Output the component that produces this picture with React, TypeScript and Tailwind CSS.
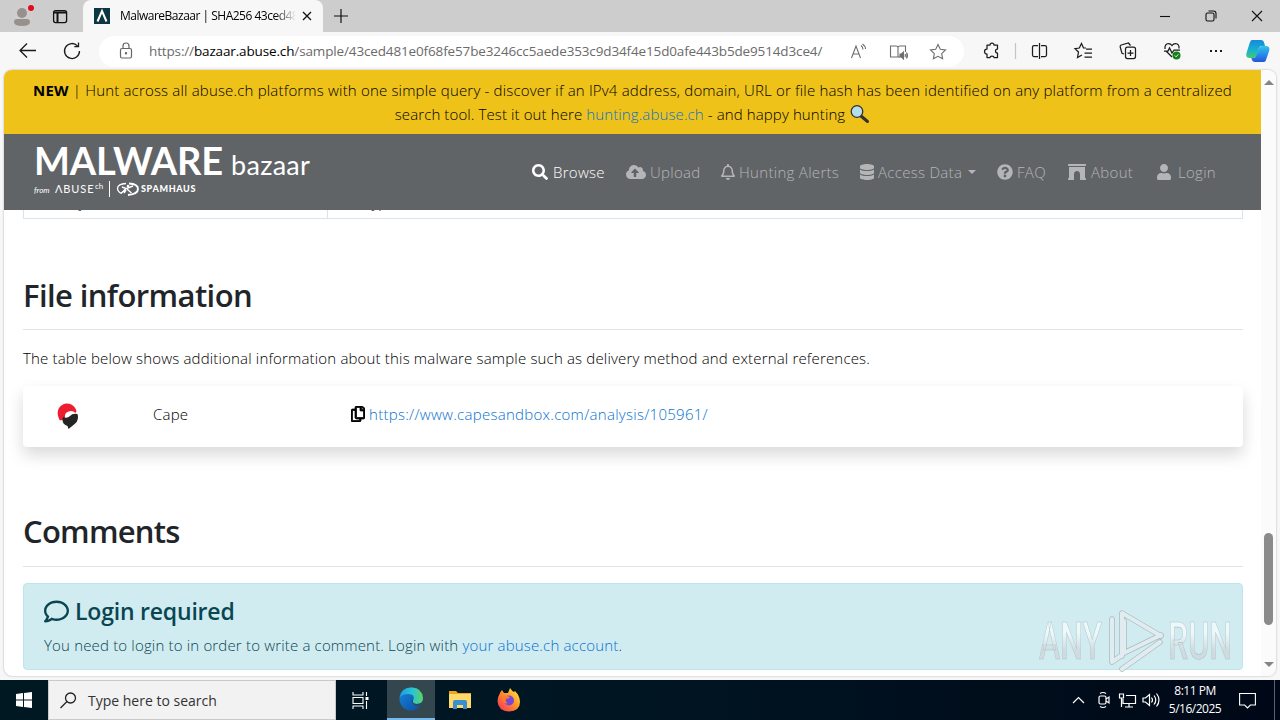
import type { ReactNode } from 'react';
import { FaArchway, FaCloudUploadAlt, FaDatabase, FaQuestionCircle, FaRegBell, FaRegComment, FaRegCopy, FaSearch, FaUser } from 'react-icons/fa';

function TitleBar() {
  return (
    <div className="flex h-8 bg-[#cdcdcd] text-black">
      <div className="flex w-[83px] items-center rounded-br-md">
        <svg width="83" height="32" viewBox="0 0 83 32" fill="none">
          <circle cx="22" cy="16" r="11" fill="#d0cecc" />
          <circle cx="22" cy="13" r="5" fill="#96918d" />
          <path d="M14 22q0-3 3-3h10q3 0 3 3 0 4-8 4t-8-4z" fill="#96918d" />
          <circle cx="31" cy="8" r="3" fill="#e00b1c" />
          <rect x="53.6" y="10.6" width="13" height="12" rx="2" stroke="#111" strokeWidth="1.3" />
          <path d="M54 12.5h12.5M57.5 13v9.5" stroke="#111" strokeWidth="2" />
        </svg>
      </div>
      <div className="flex h-8 w-[240px] items-center rounded-t-lg bg-[#f7f7f7] pl-[11px]">
        <svg width="16" height="16" viewBox="0 0 16 16">
          <rect width="16" height="16" fill="#0c3642" />
          <path d="M3.5 13.5 8 3l4.500 10.500" fill="none" stroke="#fff" strokeWidth="2" />
        </svg>
        <span className="ml-[10px] w-[176px] overflow-hidden bg-linear-to-r from-black from-88% to-transparent bg-clip-text text-[12px] tracking-[-0.5px] whitespace-nowrap text-transparent">
          MalwareBazaar | SHA256 43ced48
        </span>
        <svg className="ml-[6px]" width="10" height="10" viewBox="0 0 10 10" stroke="#111" strokeWidth="1.3">
          <path d="m1 1 8 8M9 1 1 9" />
        </svg>
      </div>
      <div className="flex flex-1 items-center justify-between pr-[17px] pl-[11px]">
        <svg width="14" height="14" viewBox="0 0 14 14" stroke="#111" strokeWidth="1.2">
          <path d="M7 0v14M0 7h14" />
        </svg>
        <svg width="104" height="12" viewBox="0 0 104 12" fill="none" stroke="#111" strokeWidth="1.1">
          <path d="M1 6.500h10" />
          <rect x="47" y="3" width="8" height="8" rx="1.500" />
          <path d="M49.500 1h5q2.500 0 2.500 2.500v5" />
          <path d="m93 1 10 10M103 1 93 11" />
        </svg>
      </div>
    </div>
  );
}

function ToolBar() {
  return (
    <div className="flex h-[38px] items-center bg-[#f7f7f7]">
      <svg width="99" height="38" viewBox="0 0 99 38" fill="none" stroke="#1b1b1b" strokeWidth="1.3">
        <path d="M36 18.500H20.500M27 11.500l-7 7 7 7" />
        <path d="M79.500 19a7.500 7.500 0 1 1-2-5.100M78.500 10.500v4.200h-4.200" />
      </svg>
      <div className="flex h-[31px] w-[865px] items-center rounded-full bg-white">
        <svg width="50" height="31" viewBox="0 0 50 31" fill="none" stroke="#666" strokeWidth="1.2">
          <rect x="21.500" y="12.500" width="11" height="9.500" rx="1.500" />
          <path d="M24 12.500V10q0-3 3-3t3 3v2.500" />
          <circle cx="27" cy="17.200" r=".6" fill="#666" />
        </svg>
        <span className="w-[700px] text-[13.5px] tracking-[-0.14px] whitespace-nowrap text-[#6b6b6b]">
          https://<span className="text-black">bazaar.abuse.ch</span>/sample/43ced481e0f68fe57be3246cc5aede353c9d34f4e15d0afe443b5de9514d3ce4/
        </span>
        <svg width="110" height="31" viewBox="849 35 110 31" fill="none" stroke="#6d6d6d" strokeWidth="1.1">
          <path d="m851.500 57 4.500-12 4.500 12M853 53h6M861 44.500q2 1.500 2 4M862.500 43q3 2 3 5" />
          <path d="M898 46v10h-7.500V45h5.500q2 0 2 1.500 0-1.500 2-1.500h5.500v6M898 56h2" />
          <path d="M900 53h1.500l2-2v7l-2-2H900zM905 53q1 1.500 0 3M906.500 51.500q2 3 0 6" fill="#6d6d6d" />
          <path d="m938 43.500 2.300 4.800 5.200.7-3.800 3.600.9 5.200-4.600-2.500-4.600 2.500.9-5.200-3.800-3.600 5.200-.7z" />
        </svg>
      </div>
      <svg width="316" height="38" viewBox="964 32 316 38" fill="none" stroke="#1c1c1c" strokeWidth="1.25">
        <path d="M987 45h3q0-2 2-2t2 2h3.500v4q-2 0-2 2t2 2v4.500H994q0-1.500-2-1.500t-2 1.500h-3V54q-2.500 0-2.500-2.500T987 49z" strokeLinejoin="round" />
        <path d="M1015.500 43v16" stroke="#c4c4c4" />
        <path d="M1038 45.500h-4q-1.500 0-1.500 1.500v8q0 1.500 1.500 1.500h4M1041 45.500h4q1.500 0 1.500 1.500v8q0 1.500-1.500 1.500h-4M1039.500 43v16" />
        <path d="m1086 48-2.500-.1-2-4.400-2.200 4.500-4.300.6 3.500 3.400-1 5.500 4.500-2.500M1086 49h6M1084.500 53h7.500M1084.500 57h7.500" />
        <path d="m1124 54-2-.7-1.800-6.300q-.3-1.500 1-2l7.300-2 2 2.500" />
        <rect x="1125.500" y="47" width="10" height="11.500" rx="2" />
        <path d="M1130.500 50v6M1127.500 53h6" />
        <path d="m1172 57-5.500-5.500M1165 49q-.5-5 3.500-5.500 2.200 0 3.500 2 1.300-2 3.500-2 4 .5 3.500 5M1164 51h4l1.500-3 2.500 5 2-3h6" />
        <circle cx="1176.500" cy="55.500" r="4" fill="#16801f" stroke="none" />
        <path d="m1174.800 55.500 1.300 1.300 2.200-2.400" stroke="#fff" strokeWidth=".9" />
        <path d="M1210 51h2M1215 51h2M1220 51h2" strokeWidth="2" />
        <defs>
          <linearGradient id="pilotLeft" x1="0" y1="0" x2="0" y2="1">
            <stop stopColor="#1689dc" />
            <stop offset=".6" stopColor="#19b4cb" />
            <stop offset="1" stopColor="#48c96c" />
          </linearGradient>
          <linearGradient id="pilotRight" x1="0" y1="0" x2="0" y2="1">
            <stop stopColor="#30c5e4" />
            <stop offset=".5" stopColor="#2a8eed" />
            <stop offset="1" stopColor="#2357dc" />
          </linearGradient>
        </defs>
        <path d="M1252 40h9q2.500 0 3.200 3l.8 3h-3q-2.500 0-3.300 3l-1.700 6q-1 3-4 3h-3q-5 0-3.500-5l3-9.500q1-3.500 2.500-3.500z" fill="url(#pilotLeft)" stroke="none" />
        <path d="M1264 62h-9q-2.500 0-3.200-2.500l-.5-1.500h2q2.500 0 3.300-3l2-6q1-3 4-3h3q5 0 3.500 5l-2.600 7.500q-1 3.500-2.500 3.500z" fill="url(#pilotRight)" stroke="none" />
      </svg>
    </div>
  );
}

function NavItem({ icon, label, className }: { icon: ReactNode; label: string; className: string }) {
  return (
    <a className={`flex shrink-0 items-center text-[15px] tracking-[0.3px] whitespace-nowrap ${className}`}>
      {icon}
      <span>{label}</span>
    </a>
  );
}

function SiteHeader() {
  return (
    <header className="z-10 w-[1257px] shrink-0">
      <div className="h-16 bg-[#efc219] pt-2 text-center text-[15px] leading-6 font-light text-black">
        <p className="tracking-[0.18px] whitespace-nowrap">
          <b className="font-bold">NEW</b> | Hunt across all abuse.ch platforms with one simple query - discover if an IPv4 address, domain, URL or file hash has been identified on any platform from a centralized
        </p>
        <p className="flex items-center justify-center tracking-[0.11px] whitespace-pre">
          search tool. Test it out here <a className="text-[#0b74cb]">hunting.abuse.ch</a> - and happy hunting{' '}
          <svg width="21" height="20" viewBox="0 0 21 20">
            <path d="m12 12 6.500 5.500" stroke="#333" strokeWidth="3" strokeLinecap="round" />
            <circle cx="8" cy="7.500" r="5.800" fill="#b5deec" stroke="#333" strokeWidth="1.300" />
          </svg>
        </p>
      </div>
      <div className="flex h-[76px] justify-between bg-[#616467] pr-[44px] pl-[30px]">
        <div className="flex flex-col text-white">
          <div className="mt-[6px] flex h-[40px] items-baseline font-[Lato,sans-serif]">
            <span className="w-[197px] text-[38px] leading-[40px] font-bold tracking-[-0.2px]">MALWARE</span>
            <span className="text-[27px] leading-[40px] tracking-[0.3px]">bazaar</span>
          </div>
          <div className="flex h-[18px] items-center font-[Lato,sans-serif]">
            <i className="w-[21px] pt-0.5 text-[8px]">from</i>
            <span className="w-[40px] text-[11px] tracking-[0.9px]">ΛBUSE</span>
            <span className="mb-[6px] w-[9px] text-[8px]">ch</span>
            <span className="mr-[6px] ml-[5px] h-[16px] w-px bg-white" />
            <svg width="23" height="14" viewBox="0 0 23 14" fill="none" stroke="#fff">
              <path d="M10 1.500Q1.500 2 1.500 6.500q0 3 4 5" strokeWidth="1.300" />
              <path d="M12 13q10-1 10-6 0-5-9-5.500" strokeWidth="1.900" />
              <path d="m5 11.500 5-5L6 5M10.500 6.500 17 4M11 7l4.500 4M10 8l-2 3" strokeWidth="1.400" />
              <circle cx="12" cy="4" r="1.300" fill="#fff" stroke="none" />
            </svg>
            <span className="ml-[2px] text-[9px] font-black tracking-[0.65px]">SPAMHAUS</span>
          </div>
        </div>
        <nav className="flex items-center font-light text-[#b3b5b7]">
          <NavItem className="w-[94px] gap-[5px] text-white" icon={<FaSearch className="h-4 w-4" />} label="Browse" />
          <NavItem className="w-[95px] gap-1" icon={<FaCloudUploadAlt className="h-4 w-5" />} label="Upload" />
          <NavItem className="w-[139px] gap-1" icon={<FaRegBell className="h-4 w-3.5" />} label="Hunting Alerts" />
          <NavItem className="w-[108px] gap-1" icon={<FaDatabase className="h-4 w-3.5" />} label="Access Data" />
          <span className="mr-[21px] h-0 w-0 border-x-4 border-t-4 border-x-transparent border-t-[#b3b5b7]" />
          <NavItem className="w-[71px] gap-1" icon={<FaQuestionCircle className="h-4 w-4" />} label="FAQ" />
          <NavItem className="w-[89px] gap-[5px]" icon={<FaArchway className="h-4 w-[18px]" />} label="About" />
          <NavItem className="w-[60px] gap-[7px]" icon={<FaUser className="h-4 w-3.5" />} label="Login" />
        </nav>
      </div>
    </header>
  );
}

function PageContent() {
  return (
    <main className="w-[1257px] pr-[18px] pl-[19px] text-[15px] leading-6 font-light text-black">
      <div className="flex h-[9px] items-end overflow-hidden border-x border-b border-[#dee2e6]">
        <div className="h-7 w-[304px] border-r border-[#dee2e6] pl-2">Delivery</div>
        <div className="h-7 pl-[12px]">File type</div>
      </div>
      <h2 className="mt-[57px] text-[31px] leading-[38px] font-semibold tracking-[-0.6px] text-[#212529]">File information</h2>
      <hr className="mt-[15px] border-[#e2e3e4]" />
      <p className="mt-[16px] tracking-[0.17px]">The table below shows additional information about this malware sample such as delivery method and external references.</p>
      <div className="mt-[16px] flex h-[61px] items-center rounded bg-white pb-[5px] shadow-[0_8px_16px_rgba(0,0,0,0.15)]">
        <svg className="mt-1 ml-[34px]" width="22" height="26" viewBox="0 0 22 26">
          <path d="M2.500 17Q-1 10 2 5q3-4.500 8-4.500 7 0 9.500 7.500l-1 2q-3-3-7-1.500-4 1.500-3.500 5.500-1 4-5.500 3z" fill="#ed1c2e" />
          <path d="M6 14q4 2 7-1 2.500-3 7.500-2 2 7-4 11l-5 4-1-3Q4 21 6 14z" fill="#242424" />
        </svg>
        <span className="ml-[74px] w-[198px] tracking-[0.2px]">Cape</span>
        <FaRegCopy className="h-4 w-3.5" strokeWidth={24} />
        <a className="ml-[4px] tracking-[0.28px] text-[#0872d0]">https://www.capesandbox.com/analysis/105961/</a>
      </div>
      <h2 className="mt-[65px] text-[31px] leading-[38px] font-semibold tracking-[-0.75px] text-[#212529]">Comments</h2>
      <hr className="mt-[16px] border-[#e2e3e4]" />
      <div className="mt-[16px] h-[87px] rounded border border-[#bee5eb] bg-[#d1ecf1] px-5 pt-[12px] text-[#0a4652]">
        <h4 className="flex items-center gap-[6px] text-[23px] leading-[30px] font-semibold tracking-[-0.2px]">
          <FaRegComment size={25} />
          <span>Login required</span>
        </h4>
        <p className="mt-[7px] tracking-[0.17px]">
          You need to login to in order to write a comment. Login with <a className="text-[#0872d0]">your abuse.ch account</a>.
        </p>
      </div>
    </main>
  );
}

function ScrollBar() {
  return (
    <div className="flex w-[15px] flex-col items-center bg-[#fbfbfb] pt-[10px] pb-[9px]">
      <div className="h-0 w-0 border-x-[5px] border-b-[5px] border-x-transparent border-b-[#858585]" />
      <div className="mt-[448px] h-[92px] w-[9px] rounded-full bg-[#8b8b8b]" />
      <div className="mt-auto h-0 w-0 border-x-[5px] border-t-[5px] border-x-transparent border-t-[#858585]" />
    </div>
  );
}

function Watermark() {
  return (
    <div className="absolute top-[606px] left-[1038px] h-[70px] w-[198px] opacity-90">
      <svg width="198" height="70" viewBox="0 0 198 70" fill="none">
        <defs>
          <linearGradient id="mark" gradientUnits="userSpaceOnUse" x1="0" y1="16" x2="0" y2="54">
            <stop offset=".3" stopColor="#f0fafc" />
            <stop offset=".75" stopColor="#cfdadd" />
          </linearGradient>
        </defs>
        <g fontFamily="Roboto, sans-serif" fontSize="51" fontWeight="500" fill="url(#mark)" stroke="#abbcc0" strokeWidth=".6">
          <text x="1" y="53" textLength="63" lengthAdjust="spacingAndGlyphs">ANY</text>
          <text x="130" y="53" textLength="64" lengthAdjust="spacingAndGlyphs">RUN</text>
        </g>
        <g strokeLinejoin="round" strokeLinecap="round">
          <path d="M84 50 84 7l39 23M74 13v43M86 15v32l37-18M84 63l38-27M74 56l10-7" stroke="#a8b5b9" strokeWidth="5.500" />
          <path d="M84 50 84 7l39 23M74 13v43M86 15v32l37-18M84 63l38-27M74 56l10-7" stroke="#e2edef" strokeWidth="4" />
        </g>
      </svg>
    </div>
  );
}

function TaskBar() {
  return (
    <footer className="flex h-10 items-center bg-linear-to-r from-[#001822] via-[#001522] to-[#000817] text-white">
      <div className="flex w-12 justify-center">
        <svg width="16" height="16" viewBox="0 0 16 16" fill="#fff">
          <path d="m0 2 7-1v6.500H0zM8 .9 16 0v7.500H8zM0 8.500h7V15l-7-1zM8 8.500h8V16l-8-1z" />
        </svg>
      </div>
      <div className="flex h-10 w-[288px] items-center border border-[#c9c9c9] bg-[#f2f2f2] pl-[11px] text-[#333]">
        <svg width="17" height="17" viewBox="0 0 17 17" fill="none" stroke="#222" strokeWidth="1.300">
          <circle cx="10.500" cy="6" r="5" />
          <path d="M7 9.500.5 16" />
        </svg>
        <span className="ml-[11px] text-[14px]">Type here to search</span>
      </div>
      <div className="flex w-[51px] justify-center pr-[3px]">
        <svg width="17" height="17" viewBox="0 0 17 17" fill="none" stroke="#fff" strokeWidth="1.100">
          <path d="M1 0v3h10V0M1 17v-3h10v3M1 5.500h10v6H1zM14.500 0v4M14.500 9v8" />
          <path d="M13.500 5h3v3h-3z" fill="#fff" stroke="none" />
        </svg>
      </div>
      <div className="flex h-10 w-12 items-center justify-center border-b-2 border-[#76b9ed] bg-[#34474f]">
        <svg width="24" height="24" viewBox="0 0 24 24">
          <defs>
            <linearGradient id="edgeTop">
              <stop stopColor="#1b9de2" />
              <stop offset=".55" stopColor="#2bc3d2" />
              <stop offset="1" stopColor="#5bd565" />
            </linearGradient>
            <linearGradient id="edgeLow" x1="0" y1="0" x2="1" y2="1">
              <stop stopColor="#1687db" />
              <stop offset="1" stopColor="#0b4ca0" />
            </linearGradient>
          </defs>
          <circle cx="12" cy="12" r="11.500" fill="url(#edgeLow)" />
          <path d="M.5 11Q2 0 13 .5 23 1 24 11q0 6-7 6-5 0-3-3 3-7-5-7-6 0-8.500 4z" fill="url(#edgeTop)" />
          <path d="M14 12q-2 1-1 4 3 4 10 2l1.500-1.500V14q-2 3-7 3-5-.5-3.500-5z" fill="#34474f" />
        </svg>
      </div>
      <div className="flex w-[49px] justify-center">
        <svg width="22" height="20" viewBox="0 0 22 20">
          <path d="M0 1h7l2 2h13v5H0z" fill="#e9a724" />
          <path d="M0 4h22v14H0z" fill="#ffda6b" />
          <path d="M4 19v-7q0-2 2-2h10q2 0 2 2v7h-4v-4H8v4z" fill="#3a8fd0" />
        </svg>
      </div>
      <div className="flex w-[49px] justify-center">
        <svg width="24" height="24" viewBox="0 0 24 24">
          <defs>
            <linearGradient id="fox" x1="1" y1="0" x2="0" y2="1">
              <stop stopColor="#fff04a" />
              <stop offset=".45" stopColor="#ff9727" />
              <stop offset="1" stopColor="#f52560" />
            </linearGradient>
          </defs>
          <path d="M3 5q1-2 2-3l2 3 4 0 2-5q2 3 4 4l1-1q5 5 5 11 0 9-11 9.500Q1 23 .5 13 1 8 3 5z" fill="url(#fox)" />
          <circle cx="12" cy="12.500" r="5" fill="#7846d8" />
          <path d="M5 9q3-3 8 0-1 2-4 2-1 3 2 4-5 2-6-6z" fill="#ff7b2d" />
        </svg>
      </div>
      <svg className="ml-auto" width="92" height="20" viewBox="0 0 92 20" fill="none" stroke="#fff" strokeWidth="1.200">
        <path d="m1 13 5.500-5.500L12 13" />
        <rect x="27" y="6" width="7" height="8" rx="1.500" />
        <path d="m34 9 3-2v6l-3-2M28 3.500q3-2 6 0M28 16.500q3 2 6 0" />
        <path d="M54 5.500h9.500v8H51V9M57 13.500V17M53 17h8M47.500 4h4v4h-4zM49.500 8v9" />
        <path d="M71 8h2.500l4-3.500v11l-4-3.500H71zM79.500 7.500q2 2.500 0 5M82 5.500q3.500 4.500 0 9M84.500 3.500q5 6.500 0 13" />
      </svg>
      <div className="ml-[3px] w-[56px] text-center text-[12px] leading-[18px] tracking-[-0.5px] whitespace-nowrap">
        <div>8:11 PM</div>
        <div>5/16/2025</div>
      </div>
      <svg className="mr-[18px] ml-[16px]" width="17" height="17" viewBox="0 0 17 17" fill="none" stroke="#fff" strokeWidth="1.100">
        <path d="M.6 1.500h15.800v11.500h-5l-2.900 3-2.900-3h-5z" />
      </svg>
      <div className="h-10 w-[6px] border-l border-[#596373]" />
    </footer>
  );
}

export default function App() {
  return (
    <div className="relative flex h-[720px] w-[1280px] flex-col overflow-hidden bg-[#f7f7f7] font-['Open_Sans','Noto_Sans',sans-serif]">
      <TitleBar />
      <ToolBar />
      <div className="h-[610px] px-1 pb-[4px]">
        <div className="flex h-[606px] overflow-hidden rounded-lg bg-white shadow-[0_0_2px_rgba(0,0,0,0.35)]">
          <div className="flex w-[1257px] flex-col">
            <SiteHeader />
            <PageContent />
          </div>
          <ScrollBar />
        </div>
      </div>
      <TaskBar />
      <Watermark />
    </div>
  );
}
